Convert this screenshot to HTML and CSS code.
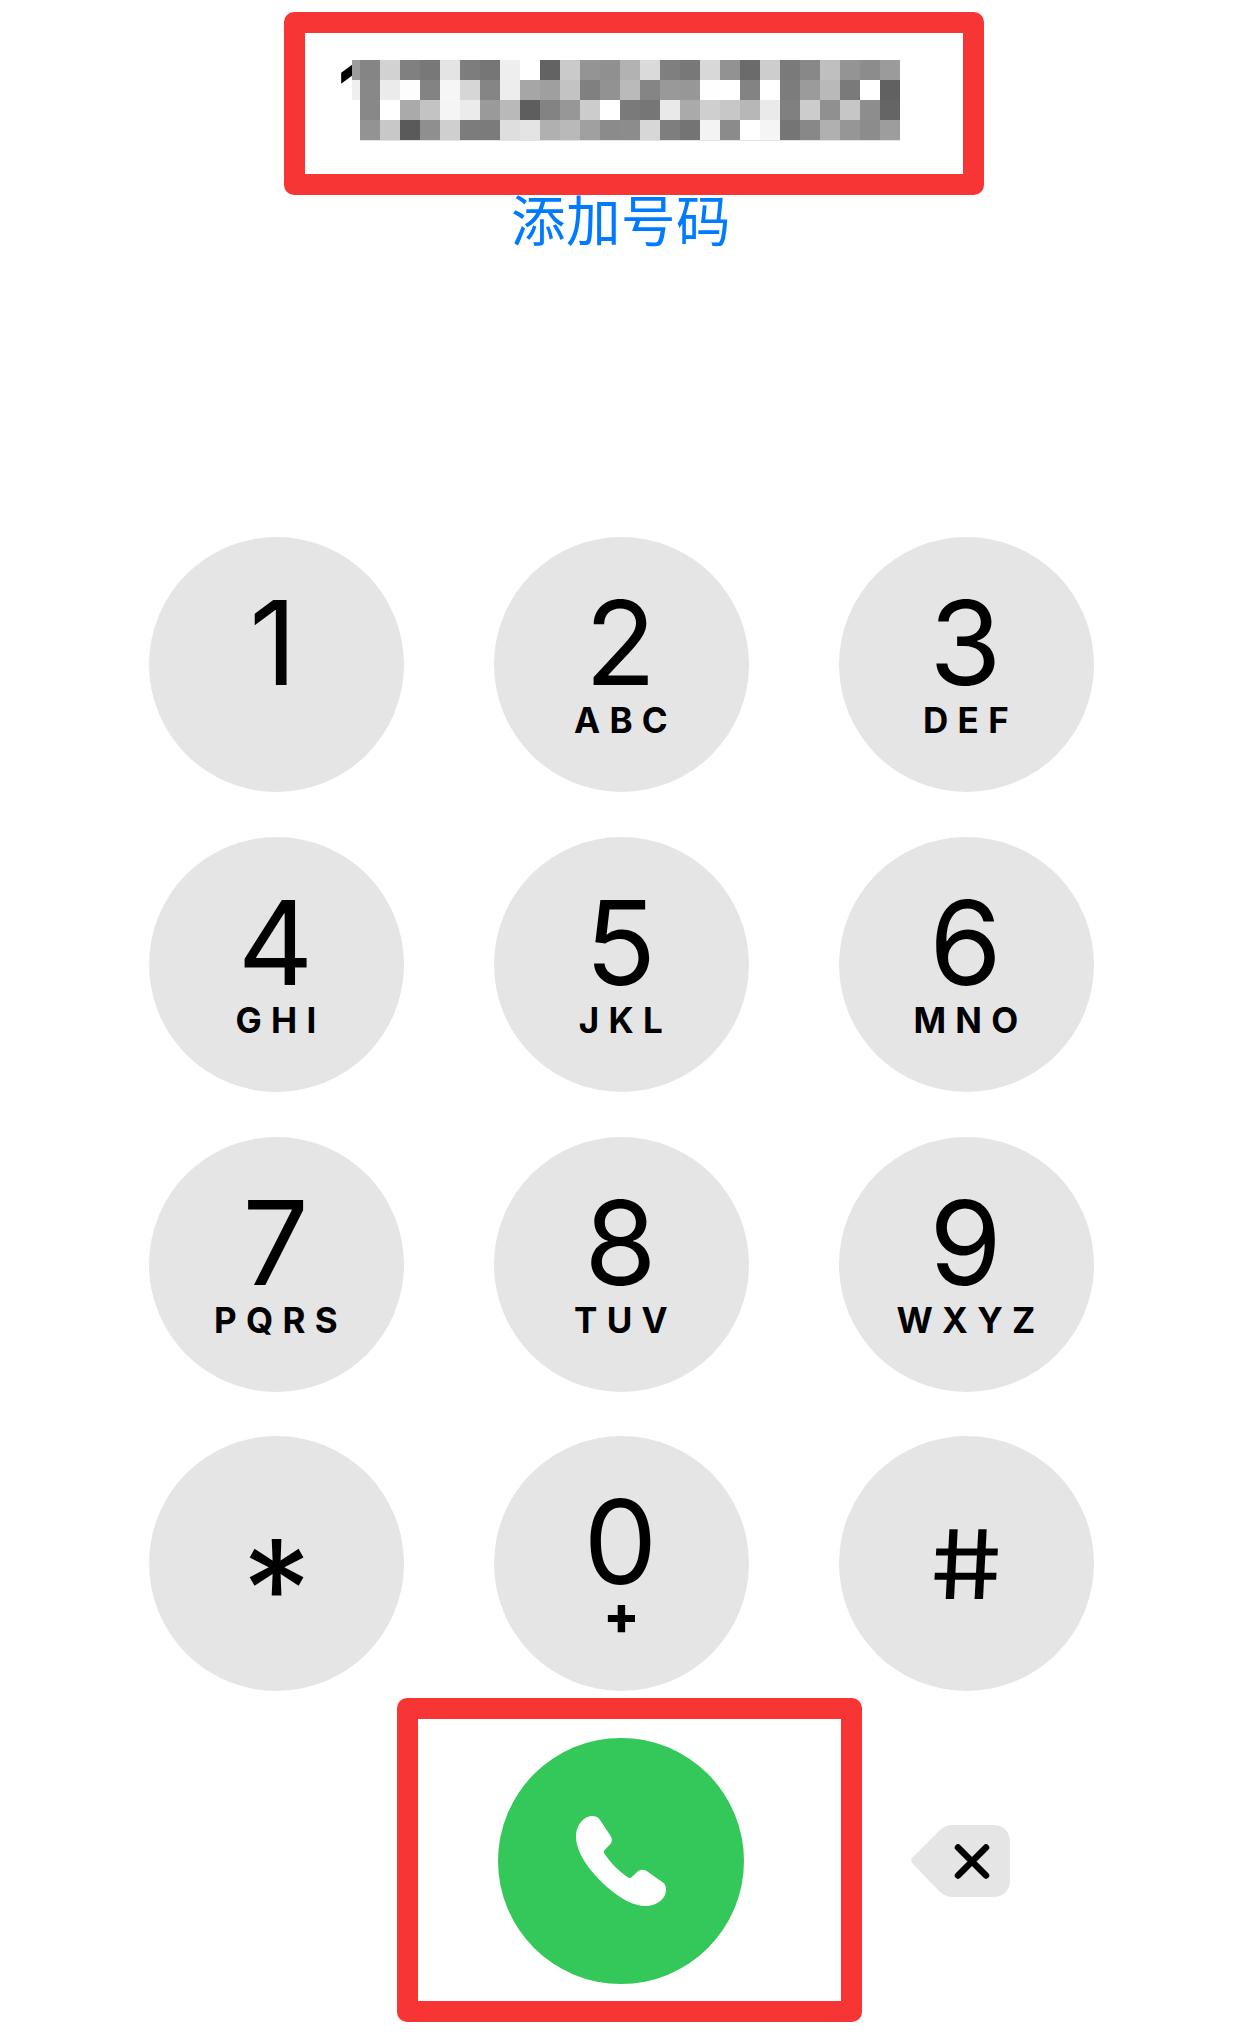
FILE: index.html
```
<!DOCTYPE html>
<html lang="zh-CN">
<head>
    <meta charset="UTF-8">
    <meta name="viewport" content="width=device-width, initial-scale=1.0">
    <title>拨号键盘</title>
    <link rel="stylesheet" href="styles.css">
</head>
<body>
    <div class="dialer">
        <div class="header">
            <div class="number">
                <span class="number-text">1</span>
                <div class="mosaic-edge"></div>
                <div class="mosaic" id="mosaic"></div>
            </div>
            <a class="add-number">添加号码</a>
        </div>

        <div class="keypad">
            <div class="key"><span class="digit one">1</span></div>
            <div class="key"><span class="digit">2</span><span class="letters">ABC</span></div>
            <div class="key"><span class="digit">3</span><span class="letters">DEF</span></div>
            <div class="key"><span class="digit">4</span><span class="letters">GHI</span></div>
            <div class="key"><span class="digit">5</span><span class="letters">JKL</span></div>
            <div class="key"><span class="digit">6</span><span class="letters">MNO</span></div>
            <div class="key"><span class="digit">7</span><span class="letters">PQRS</span></div>
            <div class="key"><span class="digit">8</span><span class="letters">TUV</span></div>
            <div class="key"><span class="digit">9</span><span class="letters">WXYZ</span></div>
            <div class="key"><span class="digit star">*</span></div>
            <div class="key"><span class="digit">0</span><span class="letters plus">+</span></div>
            <div class="key"><span class="digit hash">#</span></div>
        </div>

        <div class="actions">
            <div class="call-btn">
                <svg class="phone-icon" viewBox="0 0 90 90">
                    <path d="M0 21 C0 9 8 0 16 0 C20 0 22 1 24 4 L34 19 C36.500 22.500 36.500 25.500 34 28.500 L29 33.500 C27.500 35 27.500 36.500 29 38.500 C35 47 42 54.500 50 60 C53 62.500 54.500 62.500 57 60 L60 57 C64 53 68 53 72 56 L87 66.500 C89.500 68.500 90 70.500 90 74 C90 82 82 90 69 90 C59 90 46 84 31 71 C12 54 0 35 0 21 Z" fill="#fff"/>
                </svg>
            </div>
            <div class="delete-btn">
                <svg class="delete-icon" viewBox="0 0 99 72">
                    <path d="M29 5 C33 1.500 37 0 42 0 H82 C93 0 99 7 99 17 V55 C99 65 93 72 82 72 H42 C37 72 33 70.500 29 67 L2 39 Q-1.500 35.500 2 32 Z" fill="#e5e5e5"/>
                    <path d="M47 22.500 L75 50.500 M75 22.500 L47 50.500" stroke="#000" stroke-width="6.5" stroke-linecap="round"/>
                </svg>
            </div>
        </div>

        <div class="mark mark-number"></div>
        <div class="mark mark-call"></div>
    </div>

    <script>
        // Grises del mosaico, una fila por línea
        const rows = [
            '85 d2 80 78 e4 7d 76 ee ff 63 ca 94 90 b2 da 7f 78 d8 92 6b cd 7a 88 bf 94 8c 9b',
            '88 eb fd 83 f6 d6 85 ed a6 9f c3 80 92 ba 85 99 97 fe ff 83 ff 7c 9b b9 7a ff 61',
            '88 ff aa c3 f5 eb 9a b9 5e 83 97 cc ff 7a 76 e9 aa cf c7 b7 ea 80 cc 90 c6 8d 65',
            '93 c8 5a 8f cf 7c 7b de e4 b0 b9 a0 8b 8c d7 7e 74 f3 8b ff f5 75 88 b0 96 8c 9d'
        ];

        document.getElementById('mosaic').innerHTML = rows
            .map(row => row.split(' ').map(g => `<i style="background:#${g}${g}${g}"></i>`).join(''))
            .join('');
    </script>
</body>
</html>
```
FILE: styles.css
```
body {
    margin: 0;
    background: #fff;
    color: #000;
    font-family: Inter, "Noto Sans CJK SC", sans-serif;
}
.dialer {
    position: relative;
    width: 1242px;
    height: 2043px;
    overflow: hidden;
}
.header {
    display: flex;
    flex-direction: column;
    align-items: center;
    height: 537px;
}
.number {
    position: relative;
    width: 574px;
    height: 80px;
    margin-top: 60px;
}
.number-text {
    position: absolute;
    left: 2px;
    top: 0;
    font-size: 110px;
    line-height: 80px;
}
.mosaic {
    position: absolute;
    left: 26px;
    top: 0;
    display: grid;
    grid-template-columns: repeat(27, 20px);
    grid-auto-rows: 20px;
    border-bottom: 1px solid #e4e4e4;
}
.mosaic-edge {
    position: absolute;
    left: 18px;
    top: 0;
    width: 8px;
    height: 80px;
    background: linear-gradient(#9d9d9d 20px, #efefef 20px, #efefef 40px, #fff 40px);
}
.add-number {
    margin-top: 48px;
    font-family: "Noto Sans CJK SC", sans-serif;
    font-size: 54.5px;
    font-weight: 400;
    line-height: 60px;
    letter-spacing: 0.5px;
    color: #007aff;
}
.keypad {
    display: grid;
    grid-template-columns: repeat(3, 255px);
    grid-auto-rows: 255px;
    gap: 44.8px 90px;
    padding-left: 149px;
}
.key {
    display: flex;
    flex-direction: column;
    align-items: center;
    border-radius: 50%;
    background: #e5e5e5;
}
.digit {
    margin-top: 47px;
    padding-right: 2px;
    font-size: 117px;
    line-height: 117px;
}
.one {
    padding-right: 7px;
}
.letters {
    margin-top: 1px;
    padding-left: 8px;
    font-size: 35px;
    font-weight: 700;
    line-height: 37px;
    letter-spacing: 9.3px;
}
.plus {
    margin-top: -3px;
    padding-left: 0;
    font-size: 53px;
    font-weight: 800;
    letter-spacing: 0;
}
.star {
    margin-top: 94px;
    padding-right: 0;
    font-size: 138px;
    font-weight: 400;
}
.hash {
    margin-top: 70px;
    padding-right: 1px;
    font-size: 96px;
    transform: skewX(8deg) scaleX(1.18);
}
.actions {
    display: grid;
    grid-template-columns: repeat(3, 255px);
    column-gap: 90px;
    align-items: center;
    height: 246px;
    margin-top: 46.6px;
    padding-left: 149px;
}
.call-btn {
    grid-column: 2;
    display: flex;
    align-items: center;
    justify-content: center;
    width: 246px;
    height: 246px;
    margin-left: 4px;
    border-radius: 50%;
    background: #34c759;
}
.phone-icon {
    width: 90px;
    height: 90px;
}
.delete-btn {
    padding-left: 72px;
}
.delete-icon {
    display: block;
    width: 99px;
    height: 72px;
}
/* Marcos rojos sobre el número y el botón de llamada */
.mark {
    position: absolute;
    box-sizing: border-box;
    border: 21px solid #f83535;
    border-radius: 10px;
}
.mark-number {
    left: 283.5px;
    top: 12px;
    width: 700px;
    height: 183px;
}
.mark-call {
    left: 397.3px;
    top: 1698px;
    width: 464.4px;
    height: 323.7px;
}
```
